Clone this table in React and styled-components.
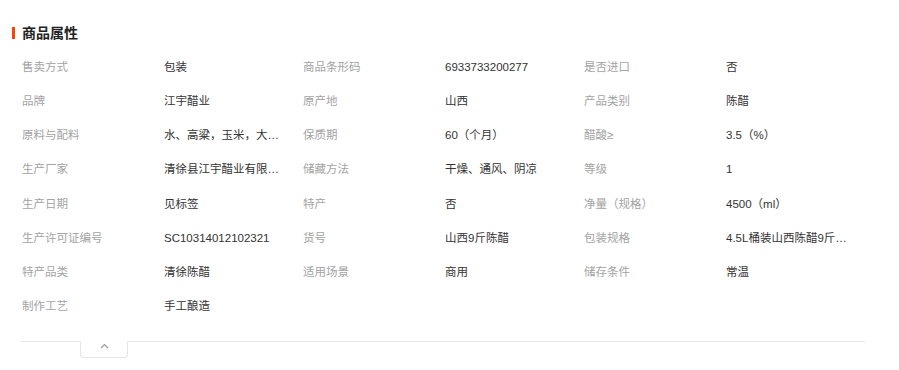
import React from "react";
import styled, { createGlobalStyle } from "styled-components";

const GlobalStyle = createGlobalStyle`
  html, body { margin: 0; padding: 0; background: #fff; }
  body {
    font-family: "Liberation Sans", "Noto Sans CJK SC", sans-serif;
  }
`;

const Panel = styled.section`
  width: 899px;
  box-sizing: border-box;
  padding: 27px 34px 0 12px;
`;

const Header = styled.div`
  display: flex;
  align-items: center;
  height: 12px;
`;

const Bar = styled.span`
  width: 3px;
  height: 12px;
  background: #ff4400;
`;

const Title = styled.h2`
  margin: -2px 0 0 7px;
  font-size: 14px;
  line-height: 12px;
  font-weight: 700;
  color: #222;
  font-family: "Noto Sans CJK SC", sans-serif;
`;

const Grid = styled.dl`
  margin: 11px 0 0;
  padding-left: 10px;
  display: grid;
  grid-template-columns: repeat(3, 142px 139px);
  grid-auto-rows: 34.15px;
  align-items: center;
  font-size: 11.5px;
  line-height: 16px;
`;

const Label = styled.dt`
  margin: 0;
  color: #a3a3a3;
  white-space: nowrap;
`;

const Value = styled.dd`
  margin: 0;
  color: #333;
  max-width: 122px;
  white-space: nowrap;
  overflow: hidden;
  text-overflow: ellipsis;
`;

const Footer = styled.div`
  margin: 18px 0 0 9px;
  border-top: 1px solid #e5e5e5;
  display: flex;
`;

const Toggle = styled.button`
  margin: -1px 0 0 59px;
  width: 48px;
  height: 17px;
  box-sizing: border-box;
  padding: 2px 0 0;
  background: #fff;
  border: 1px solid #e5e5e5;
  border-top: none;
  border-radius: 0 0 4px 4px;
  display: flex;
  justify-content: center;
  align-items: flex-start;
  cursor: pointer;
`;

const rows = [
  ["售卖方式", "包装", "商品条形码", "6933733200277", "是否进口", "否"],
  ["品牌", "江宇醋业", "原产地", "山西", "产品类别", "陈醋"],
  ["原料与配料", "水、高粱，玉米，大麦，豌豆，麸皮，谷糠，食用盐", "保质期", "60（个月）", "醋酸≥", "3.5（%）"],
  ["生产厂家", "清徐县江宇醋业有限公司", "储藏方法", "干燥、通风、阴凉", "等级", "1"],
  ["生产日期", "见标签", "特产", "否", "净量（规格）", "4500（ml）"],
  ["生产许可证编号", "SC10314012102321", "货号", "山西9斤陈醋", "包装规格", "4.5L桶装山西陈醋9斤装老陈醋"],
  ["特产品类", "清徐陈醋", "适用场景", "商用", "储存条件", "常温"],
  ["制作工艺", "手工酿造"],
];

export default function App() {
  return (
    <>
      <GlobalStyle />
      <Panel>
        <Header>
          <Bar />
          <Title>商品属性</Title>
        </Header>
        <Grid>
          {rows.map((r, i) =>
            r.map((t, j) =>
              j % 2 === 0 ? (
                <Label key={`${i}-${j}`}>{t}</Label>
              ) : (
                <Value key={`${i}-${j}`} title={t}>{t}</Value>
              )
            )
          )}
        </Grid>
        <Footer>
          <Toggle aria-label="收起">
            <svg width="9" height="6" viewBox="0 0 9 6">
              <path d="M1 5 L4.5 1.5 L8 5" fill="none" stroke="#999" strokeWidth="1.2" />
            </svg>
          </Toggle>
        </Footer>
      </Panel>
    </>
  );
}
